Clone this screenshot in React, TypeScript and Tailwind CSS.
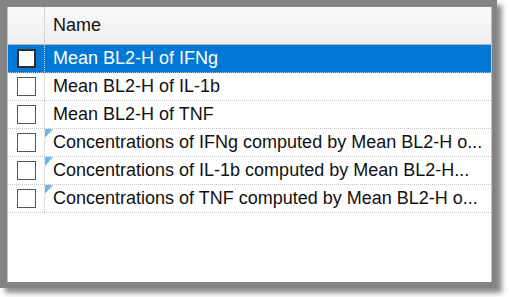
const rows = [
  { name: "Mean BL2-H of IFNg", selected: true, flag: false },
  { name: "Mean BL2-H of IL-1b", selected: false, flag: false },
  { name: "Mean BL2-H of TNF", selected: false, flag: false },
  { name: "Concentrations of IFNg computed by Mean BL2-H o...", selected: false, flag: true },
  { name: "Concentrations of IL-1b computed by Mean BL2-H...", selected: false, flag: true },
  { name: "Concentrations of TNF computed by Mean BL2-H o...", selected: false, flag: true },
];

function App() {
  return (
    <div className="w-[509px] h-[297px] bg-white font-['Liberation_Sans',Arial,sans-serif] text-[18px]">
      <div className="w-[497px] h-[288px] bg-[#848484] pl-[7px] pr-[5px] pt-[7px] pb-[6px] shadow-[5px_5px_5px_rgba(0,0,0,0.45)]">
        <div className="h-full bg-white border-x border-[#b4c2d2] flex flex-col overflow-hidden">
          {/* Header */}
          <div className="h-[38px] flex shrink-0 bg-gradient-to-b from-[#fbfbfb] to-[#eeeeee] border-b border-[#b2b9c0]">
            <div className="w-[37px] shrink-0 border-r border-[#d5d5d5]" />
            <div className="flex-1 flex items-center pl-[8px] text-[#111]">Name</div>
          </div>

          {/* Rows */}
          {rows.map((row) => (
            <div
              key={row.name}
              className={
                row.selected
                  ? "h-[28px] flex shrink-0 bg-[#0078d7] text-white border-b border-dotted border-[#a0c4e8]"
                  : "h-[28px] flex shrink-0 text-[#111] border-b border-dotted border-[#c4c4c4]"
              }
            >
              <div
                className={
                  row.selected
                    ? "w-[37px] shrink-0 flex items-center justify-center border-r border-dotted border-[#cfe3f5]"
                    : "w-[37px] shrink-0 flex items-center justify-center border-r border-dotted border-[#c4c4c4]"
                }
              >
                <div
                  className={
                    row.selected
                      ? "w-[19px] h-[19px] bg-white border-2 border-[#2d2d2d]"
                      : "w-[19px] h-[19px] bg-white border-[1.5px] border-[#555555]"
                  }
                />
              </div>
              <div className="relative flex-1 flex items-center pl-[8px] whitespace-nowrap overflow-hidden">
                {row.flag && (
                  <svg className="absolute left-0 top-0" width="8" height="9" viewBox="0 0 8 9">
                    <polygon points="0,0 8,0 0,9" fill="#6cb6f0" />
                  </svg>
                )}
                {row.name}
              </div>
            </div>
          ))}
        </div>
      </div>
    </div>
  );
}

export default App;
